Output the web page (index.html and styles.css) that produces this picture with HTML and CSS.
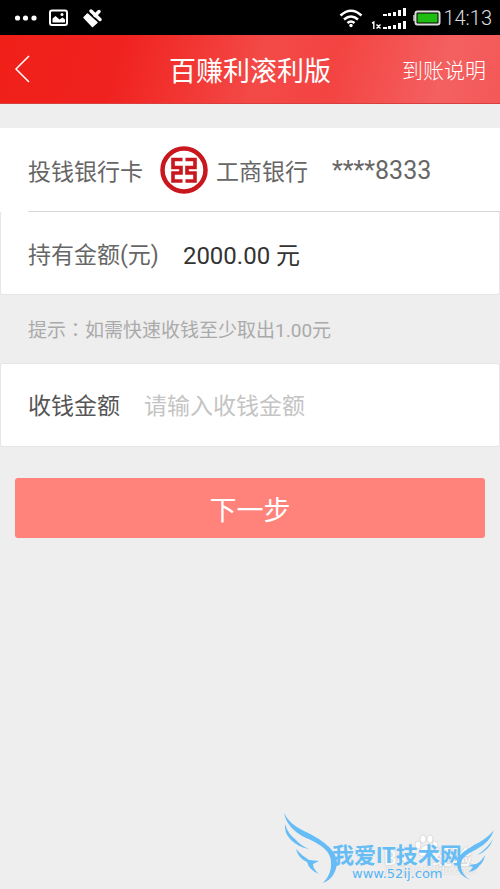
FILE: index.html
```html
<!DOCTYPE html>
<html lang="zh-CN">
<head>
    <meta charset="UTF-8">
    <meta name="viewport" content="width=device-width, initial-scale=1.0">
    <title>百赚利滚利版</title>
    <link rel="stylesheet" href="styles.css">
</head>
<body>
    <div class="status">
        <svg class="notices" width="90" height="24" viewBox="0 0 90 24" fill="#fff">
            <circle cx="2.500" cy="12" r="2.600"/>
            <circle cx="10.500" cy="12" r="2.600"/>
            <circle cx="19" cy="12" r="2.600"/>
            <rect x="35" y="4.500" width="17" height="14.500" rx="2" fill="none" stroke="#fff" stroke-width="2"/>
            <path d="M37.500 16.500v-4l3-2.500 4 3.500 3-2 2.500 2v3z"/>
            <circle cx="47" cy="8.500" r="1.500"/>
            <g stroke="#fff" stroke-linejoin="round" stroke-linecap="round">
                <path d="M69 11.500L72.500 8L82 16.500L77.500 20.500z" stroke-width="1.500"/>
                <path d="M76 5L85 13.500" stroke-width="3.500"/>
                <path d="M80 9.500L84 5.500" stroke-width="3.500"/>
            </g>
        </svg>
        <div class="signals">
            <svg width="24" height="20" viewBox="0 0 24 20" fill="none" stroke="#fff" stroke-width="2.600">
                <path d="M1.500 7.500q10.500-9.500 21 0"/>
                <path d="M5 11.500q7-6 14 0"/>
                <path d="M8.500 15q3.500-3 7 0"/>
                <circle cx="12" cy="17.500" r="1.700" fill="#fff" stroke="none"/>
            </svg>
            <svg class="bars" width="36" height="24" viewBox="0 0 36 24" fill="#fff">
                <path d="M12 7h4v2h-4zM17 6h3v3h-3zM22 5h3v4h-3zM27 3h3v6h-3zM32 1h3v8h-3z"/>
                <path d="M12 20h4v2h-4zM17 19h3v3h-3zM22 18h3v4h-3zM27 16h3v6h-3zM32 14h3v8h-3z"/>
                <path d="M1 16l1.800-.8V22M5.500 17.500l4 4M9.500 17.500l-4 4" fill="none" stroke="#fff" stroke-width="1.400"/>
            </svg>
            <svg class="battery" width="28" height="16" viewBox="0 0 28 16">
                <rect x="0" y="5" width="3" height="6" fill="#999"/>
                <rect x="2.500" y="1.500" width="24" height="13" rx="2" fill="#000" stroke="#ddd" stroke-width="2"/>
                <rect x="4.500" y="3.500" width="20" height="9" fill="#1fbd12"/>
            </svg>
            <span class="time">14:13</span>
        </div>
    </div>

    <header>
        <a class="back" href="#" aria-label="返回">
            <svg width="16" height="28" viewBox="0 0 16 28" fill="none" stroke="#fff" stroke-width="1.500">
                <path d="M15 1L2 14l13 13"/>
            </svg>
        </a>
        <h1>百赚利滚利版</h1>
        <a class="info" href="#">到账说明</a>
    </header>

    <main>
        <form>
            <div class="row bank">
                <span class="label">投钱银行卡</span>
                <svg width="48" height="48" viewBox="0 0 48 48" fill="none" stroke="#c9171e">
                    <circle cx="24" cy="24" r="21.500" stroke-width="4.500"/>
                    <path d="M22.500 13.500H13v8h8v5.500h-8v8h9.500M25.500 13.500H35v8h-8v5.500h8v8h-9.500" stroke-width="3.600"/>
                </svg>
                <span class="name">工商银行</span>
                <span class="card">****8333</span>
            </div>
            <div class="row amount">
                <span class="label">持有金额(元)</span>
                <span class="value">2000.00 元</span>
            </div>
            <p class="tip">提示<span class="colon" lang="zh-TW">：</span>如需快速收钱至少取出1.00元</p>
            <div class="row entry">
                <label for="valor">收钱金额</label>
                <input type="text" id="valor" placeholder="请输入收钱金额">
            </div>
            <button type="button">下一步</button>
        </form>
    </main>

    <div class="mark">
        <div class="baidu">
            <svg width="24" height="24" viewBox="0 0 24 24" fill="#fff" stroke="#ddd">
                <ellipse cx="4" cy="11" rx="3" ry="4"/>
                <ellipse cx="9" cy="5" rx="3" ry="4"/>
                <ellipse cx="16" cy="5" rx="3" ry="4"/>
                <ellipse cx="21" cy="11" rx="3" ry="4"/>
                <path d="M12 11q3 0 5 4 4 3 2 6-2 2-7 1-5 1-7-1-2-3 2-6 2-4 5-4z"/>
            </svg>
            <span class="baidu-name">Bai<span>经验</span></span>
            <span class="baidu-url">jingyan.baidu.com</span>
        </div>
        <svg class="wings" width="230" height="89" viewBox="0 0 230 89" fill="#66bdf5">
            <path d="M14 13q5 11 20 18c17 8 32 18 33 31q-1 16-14 21 9-9 8-21c0-12-13-19-27-25q-17-9-20-24z"/>
            <path d="M15 24q3 10 10 15 6 7 14 10-11-2-18-9-7-7-6-16z"/>
            <path d="M26 49q6 7 13 11l10 1-6 3q0 5 6 10-10-4-12-12-9-4-11-13z"/>
            <path d="M224 30q-4 12-17 19c-12 6-17 10-16 18q1 8 9 13-12-5-13-15c-1-10 8-14 17-20q13-6 20-15z"/>
            <path d="M223 39q-4 12-16 16 10-6 16-16z"/>
            <path d="M215 55q-4 7-9 9l-8 1 5 2-4 5q8-2 10-6 5-4 6-11z"/>
        </svg>
        <strong class="site">我爱IT技术网</strong>
        <span class="url">www.52ij.com</span>
    </div>
</body>
</html>
```

FILE: styles.css
```css
*{
    margin: 0;
    padding: 0;
    box-sizing: border-box;
}
body{
    position: relative;
    min-height: 100vh;
    background-color: #eee;
    font-family: Roboto, "Noto Sans CJK SC", sans-serif;
    font-size: 23px;
    color: #666;
    overflow-x: hidden;
}
svg{
    flex: none;
}
a{
    color: #fff;
    text-decoration: none;
}

/* status bar */
.status{
    display: flex;
    align-items: center;
    justify-content: space-between;
    height: 35px;
    padding: 0 8px 0 15px;
    background-color: #000;
    color: #ddd;
}
.signals{
    display: flex;
    align-items: center;
}
.bars{
    margin: 2px 6px 0 8px;
}
.time{
    margin-left: 2px;
    font-size: 20px;
    font-weight: 300;
}

/* header */
header{
    display: grid;
    grid-template-columns: 1fr auto 1fr;
    align-items: center;
    height: 69px;
    padding: 0 14px;
    background: linear-gradient(105deg, #f02018 0%, #f02220 24%, #f23632 38%, #f34a48 52%, #f34442 66%, #f46060 88%, #f45858 100%);
    border-bottom: 1px solid #d84040;
    color: #fff;
}
.back{
    display: flex;
}
h1{
    font-size: 27px;
    font-weight: 400;
}
.info{
    justify-self: end;
    font-size: 21px;
    font-weight: 300;
}

/* form */
main{
    padding-top: 24px;
}
.row{
    display: flex;
    align-items: center;
    height: 84px;
    padding: 0 28px;
    background-color: #fff;
}
.bank{
    position: relative;
}
.bank::after{
    content: "";
    position: absolute;
    left: 28px;
    right: 0;
    bottom: 0;
    height: 1px;
    background-color: #d8d8d8;
}
.bank svg{
    margin: 0 8px 0 17px;
}
.card{
    margin-left: 24px;
    font-size: 25px;
}
.amount,
.entry{
    padding: 4px 27px 0;
    line-height: 32px;
    border: 1px solid #e6e6e6;
    border-radius: 3px;
}
.amount{
    height: 83px;
    padding-top: 6px;
    border-top: 0;
}
.value{
    margin-left: 24px;
    font-size: 24px;
    color: #333;
}
.tip{
    padding: 4px 28px 0;
    font-size: 19px;
    line-height: 64px;
    color: #aaa;
}
.colon{
    font-family: "Noto Sans CJK TC", sans-serif;
    line-height: 1;
}
.entry label{
    color: #555;
}
input{
    flex: 1;
    min-width: 0;
    height: 32px;
    margin-left: 24px;
    border: 0;
    outline: 0;
    background: none;
    font: inherit;
    color: #333;
}
input::placeholder{
    color: #c4c4c4;
}
button{
    display: block;
    width: calc(100% - 30px);
    height: 60px;
    margin: 31px 15px;
    border: 0;
    border-radius: 3px;
    background-color: #ff827b;
    font: inherit;
    font-size: 27px;
    color: #fff;
    cursor: pointer;
}

/* watermark */
.mark{
    position: absolute;
    right: 0;
    bottom: 0;
    width: 230px;
    height: 89px;
    pointer-events: none;
}
.mark > *{
    position: absolute;
}
.wings{
    left: 0;
    top: 0;
}
.site{
    left: 62px;
    top: 42px;
    font-size: 22px;
    line-height: 28px;
    white-space: nowrap;
    color: #66bdf5;
}
.url{
    left: 82px;
    top: 66px;
    font-family: "DejaVu Sans", sans-serif;
    font-size: 13px;
    line-height: 16px;
    color: #55b5f5;
}
.baidu{
    left: 114px;
    top: 34px;
    width: 90px;
    height: 44px;
    white-space: nowrap;
    color: #f8f8f8;
    text-shadow: 0 0 2px #bbb;
}
.baidu > *{
    position: absolute;
}
.baidu svg{
    left: 30px;
    top: 0;
}
.baidu-name{
    display: flex;
    justify-content: space-between;
    left: 0;
    top: 14px;
    width: 88px;
    font-size: 20px;
    line-height: 20px;
    font-weight: 700;
}
.baidu-url{
    left: 2px;
    top: 30px;
    font-size: 11px;
    line-height: 14px;
}
```
